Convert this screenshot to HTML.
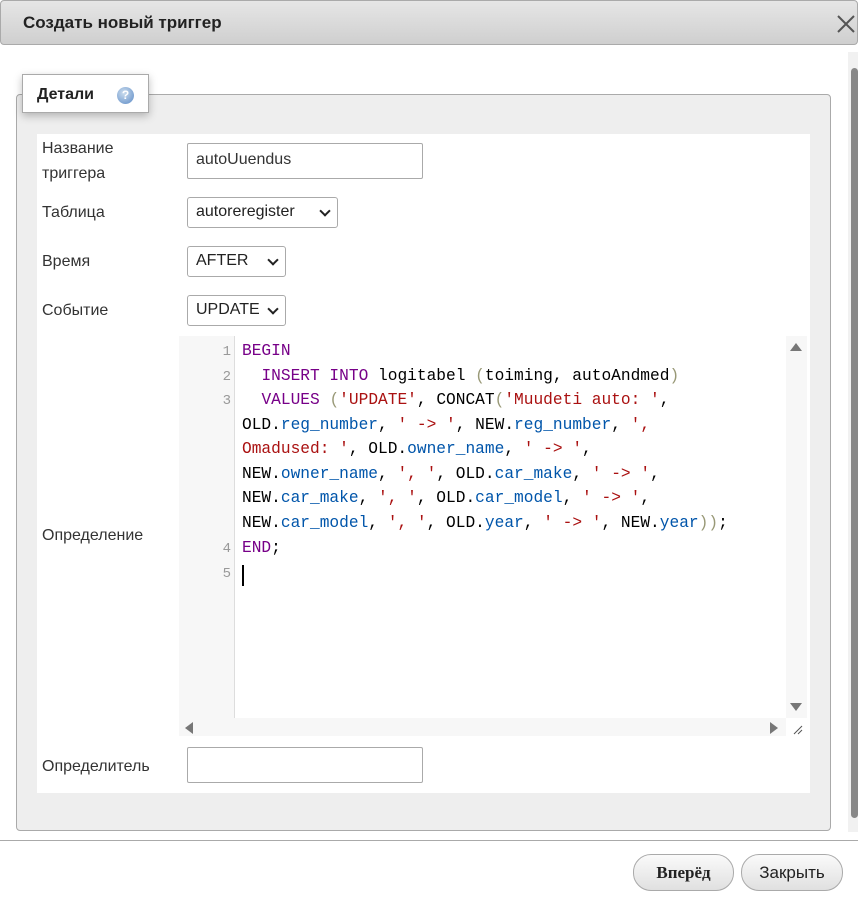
<!DOCTYPE html>
<html><head><meta charset="utf-8"><style>
*{box-sizing:border-box;margin:0;padding:0}
body{width:858px;height:902px;background:#fff;font-family:"Liberation Sans",sans-serif;position:relative;overflow:hidden;color:#333}
.title{position:absolute;left:0;top:0;width:858px;height:45px;background:linear-gradient(#e6e6e6,#cfcfcf);border:1px solid #aaa;border-radius:4px;}
.title span{position:absolute;left:22px;top:12px;font-weight:bold;font-size:17px;color:#222}
.x{position:absolute;left:836px;top:14px;width:20px;height:20px}
.sb{position:absolute;left:848px;top:52px;width:10px;height:780px;background:#f1f1f1}
.thumb{position:absolute;left:851px;top:68px;width:7px;height:750px;background:#888;border-radius:4px}
.fs{position:absolute;left:16px;top:94px;width:815px;height:737px;background:#eee;border:1px solid #aaa;border-radius:4px}
.legend{position:absolute;left:22px;top:74px;width:127px;height:39px;background:#fff;border:1px solid #aaa;box-shadow:0 3px 8px rgba(0,0,0,.25);font-weight:bold;font-size:16px;color:#222;padding:11px 0 0 14px}
.help{position:absolute;left:94px;top:12px;width:17px;height:17px;border-radius:50%;background:radial-gradient(circle at 40% 35%,#cde,#5b8ac6);color:#fff;font-size:12px;text-align:center;line-height:17px}
.inner{position:absolute;left:37px;top:134px;width:773px;height:659px;background:#fff}
.lbl{position:absolute;left:42px;font-size:16px;color:#333;line-height:25px}
.inp{position:absolute;left:187px;width:236px;height:36px;border:1px solid #aaa;border-radius:2px;font-size:16px;padding:7px 8px;color:#333}
.sel{position:absolute;left:187px;height:31px;border:1px solid #aaa;border-radius:3px;font-size:16px;padding:5px 8px;color:#222;background:#fff}
.sel:after{content:"";position:absolute;right:8px;top:9px;width:6px;height:6px;border-right:2px solid #222;border-bottom:2px solid #222;transform:rotate(45deg)}
.code{position:absolute;left:179px;top:336px;width:628px;height:400px;background:#fff}
.gut{position:absolute;left:0;top:0;width:56px;height:382px;background:#f7f7f7;border-right:1px solid #ddd}
.vs{position:absolute;left:607px;top:0;width:21px;height:382px;background:#f7f7f7}
.hs{position:absolute;left:0;top:382px;width:607px;height:18px;background:#f7f7f7}
.ln{position:absolute;left:0;width:52px;text-align:right;font-family:"Liberation Mono",monospace;font-size:14px;color:#999}
.cl{position:absolute;left:63px;font-family:"Liberation Mono",monospace;font-size:16.2px;white-space:pre;color:#000;letter-spacing:0}
.k{color:#708}.s{color:#a11}.p{color:#05a}.b{color:#997}
.btn{position:absolute;top:854px;height:37px;border:1px solid #aaa;border-radius:18px;background:linear-gradient(#fafafa,#e0e0e0);font-size:17px;text-align:center;line-height:35px;color:#222}
</style></head><body>
<div class="title"><span>Создать новый триггер</span></div>
<svg class="x" viewBox="0 0 20 20"><path d="M2 2L18 18M18 2L2 18" stroke="#555" stroke-width="2"/></svg>
<div class="sb"></div><div class="thumb"></div>
<div class="fs"></div>
<div class="legend">Детали<div class="help">?</div></div>
<div class="inner"></div>
<div class="lbl" style="top:136px">Название<br>триггера</div>
<div class="inp" style="top:143px">autoUuendus</div>
<div class="lbl" style="top:200px">Таблица</div>
<div class="sel" style="top:197px;width:151px">autoreregister</div>
<div class="lbl" style="top:249px">Время</div>
<div class="sel" style="top:246px;width:99px">AFTER</div>
<div class="lbl" style="top:298px">Событие</div>
<div class="sel" style="top:295px;width:99px">UPDATE</div>
<div class="lbl" style="top:523px">Определение</div>
<div class="code">
<div class="gut"></div><div class="vs"></div><div class="hs"></div>
<svg style="position:absolute;left:610px;top:6px" width="14" height="10"><path d="M1 9L7 1L13 9Z" fill="#777"/></svg>
<svg style="position:absolute;left:610px;top:366px" width="14" height="10"><path d="M1 1L7 9L13 1Z" fill="#777"/></svg>
<svg style="position:absolute;left:5px;top:385px" width="10" height="14"><path d="M9 1L1 7L9 13Z" fill="#777"/></svg>
<svg style="position:absolute;left:590px;top:385px" width="10" height="14"><path d="M1 1L9 7L1 13Z" fill="#777"/></svg>
<svg style="position:absolute;left:613px;top:388px" width="12" height="12"><path d="M2 10L10 2M6 10L10 6" stroke="#555"/></svg>
<div class="ln" style="top:8px">1</div><div class="ln" style="top:33px">2</div><div class="ln" style="top:57px">3</div><div class="ln" style="top:205px">4</div><div class="ln" style="top:230px">5</div>
<div class="cl" style="top:6px"><span class="k">BEGIN</span></div>
<div class="cl" style="top:31px">  <span class="k">INSERT INTO</span> logitabel <span class="b">(</span>toiming, autoAndmed<span class="b">)</span></div>
<div class="cl" style="top:55px">  <span class="k">VALUES</span> <span class="b">(</span><span class="s">'UPDATE'</span>, CONCAT<span class="b">(</span><span class="s">'Muudeti auto: '</span>,</div>
<div class="cl" style="top:80px">OLD.<span class="p">reg_number</span>, <span class="s">' -&gt; '</span>, NEW.<span class="p">reg_number</span>, <span class="s">',</span></div>
<div class="cl" style="top:104px"><span class="s">Omadused: '</span>, OLD.<span class="p">owner_name</span>, <span class="s">' -&gt; '</span>,</div>
<div class="cl" style="top:129px">NEW.<span class="p">owner_name</span>, <span class="s">', '</span>, OLD.<span class="p">car_make</span>, <span class="s">' -&gt; '</span>,</div>
<div class="cl" style="top:153px">NEW.<span class="p">car_make</span>, <span class="s">', '</span>, OLD.<span class="p">car_model</span>, <span class="s">' -&gt; '</span>,</div>
<div class="cl" style="top:178px">NEW.<span class="p">car_model</span>, <span class="s">', '</span>, OLD.<span class="p">year</span>, <span class="s">' -&gt; '</span>, NEW.<span class="p">year</span><span class="b">))</span>;</div>
<div class="cl" style="top:203px"><span class="k">END</span>;</div>
<div style="position:absolute;left:63px;top:229px;width:2px;height:21px;background:#000"></div>
</div>
<div class="lbl" style="top:754px">Определитель</div>
<div class="inp" style="top:747px"></div>
<div style="position:absolute;left:0;top:840px;width:858px;height:1px;background:#aaa"></div>
<div class="btn" style="left:633px;width:101px;font-family:'Liberation Serif',serif;font-weight:bold">Вперёд</div>
<div class="btn" style="left:741px;width:102px">Закрыть</div>
</body></html>
